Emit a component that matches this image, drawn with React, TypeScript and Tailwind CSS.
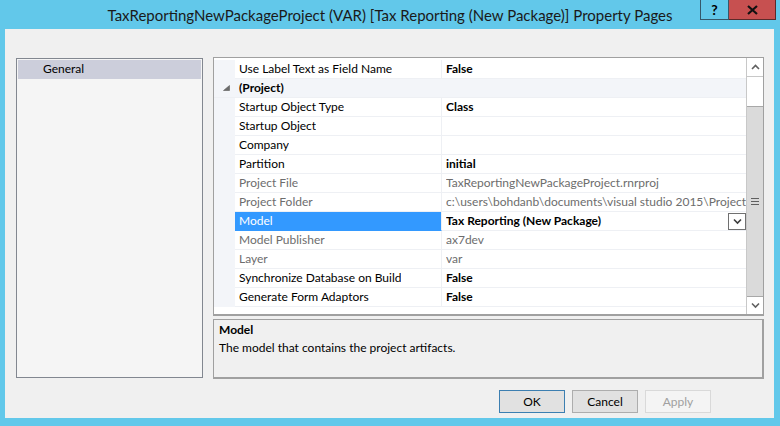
import React from 'react'

type Row =
  | { kind: 'category'; label: string }
  | { kind: 'prop'; name: string; value: string; bold?: boolean; readOnly?: boolean; selected?: boolean }

const ROWS: Row[] = [
  { kind: 'prop', name: 'Use Label Text as Field Name', value: 'False', bold: true },
  { kind: 'category', label: '(Project)' },
  { kind: 'prop', name: 'Startup Object Type', value: 'Class', bold: true },
  { kind: 'prop', name: 'Startup Object', value: '' },
  { kind: 'prop', name: 'Company', value: '' },
  { kind: 'prop', name: 'Partition', value: 'initial', bold: true },
  { kind: 'prop', name: 'Project File', value: 'TaxReportingNewPackageProject.rnrproj', readOnly: true },
  {
    kind: 'prop',
    name: 'Project Folder',
    value: 'c:\\users\\bohdanb\\documents\\visual studio 2015\\Projects\\TaxReportingNewPackageProject',
    readOnly: true,
  },
  { kind: 'prop', name: 'Model', value: 'Tax Reporting (New Package)', bold: true, selected: true },
  { kind: 'prop', name: 'Model Publisher', value: 'ax7dev', readOnly: true },
  { kind: 'prop', name: 'Layer', value: 'var', readOnly: true },
  { kind: 'prop', name: 'Synchronize Database on Build', value: 'False', bold: true },
  { kind: 'prop', name: 'Generate Form Adaptors', value: 'False', bold: true },
]

const font = { fontFamily: 'Lato, "Noto Sans", sans-serif' }

function Chevron({ dir, className }: { dir: 'up' | 'down'; className?: string }) {
  // small windows-style chevron
  const d = dir === 'up' ? 'M1 5 L4.5 1.5 L8 5' : 'M1 1.5 L4.5 5 L8 1.5'
  return (
    <svg width="9" height="7" viewBox="0 0 9 7" className={className}>
      <path d={d} fill="none" stroke="currentColor" strokeWidth="1.6" />
    </svg>
  )
}

function CategoryGlyph() {
  return (
    <svg width="7" height="6" viewBox="0 0 7 6">
      <path d="M6.5 0.5 L6.5 5.5 L0.5 5.5 Z" fill="#6b6b6b" stroke="#5a5a5a" strokeWidth="0.6" />
    </svg>
  )
}

function GridRow({ row }: { row: Row }) {
  if (row.kind === 'category') {
    return (
      <div className="flex h-[19px] bg-[#f3f5f9] border-b border-[#eef0f4]">
        <div className="w-[21px] flex items-center justify-center pl-[3px]">
          <CategoryGlyph />
        </div>
        <div className="flex-1 flex items-center pl-[4px] font-bold text-black">{row.label}</div>
      </div>
    )
  }
  const valueColor = row.readOnly ? 'text-[#6d6d6d]' : 'text-black'
  return (
    <div className="flex h-[19px]">
      <div className="w-[21px] bg-[#f3f5f9]" />
      <div
        className={
          row.selected
            ? 'w-[207px] flex items-center pl-[4px] bg-[#3399ff] text-white border-b border-[#3399ff] border-r border-r-[#eef0f4]'
            : 'w-[207px] flex items-center pl-[4px] border-b border-r border-[#eef0f4] ' + valueColor
        }
      >
        <span className="whitespace-nowrap overflow-hidden">{row.name}</span>
      </div>
      <div className={'flex-1 min-w-0 flex items-center pl-[4px] border-b border-[#eef0f4] ' + valueColor}>
        <span className={(row.bold ? 'font-bold ' : '') + 'flex-1 whitespace-nowrap overflow-hidden'}>{row.value}</span>
        {row.selected && (
          <div className="w-[18px] h-[17px] border border-[#707070] bg-white flex items-center justify-center text-[#3c3c3c]">
            <Chevron dir="down" />
          </div>
        )}
      </div>
    </div>
  )
}

function ScrollBar() {
  return (
    <div className="w-[17px] flex flex-col border-l border-[#c8c8c8] bg-white">
      <div className="h-[19px] flex items-center justify-center text-[#606060] border-b border-[#c8c8c8]">
        <Chevron dir="up" />
      </div>
      <div className="h-[29px]" />
      <div className="flex-1 bg-[#dadada] border-y border-[#a8a8a8] flex items-center justify-center">
        <div className="flex flex-col gap-[2px]">
          <div className="w-[8px] h-px bg-[#606060]" />
          <div className="w-[8px] h-px bg-[#606060]" />
          <div className="w-[8px] h-px bg-[#606060]" />
        </div>
      </div>
      <div className="h-[17px] flex items-center justify-center text-[#606060]">
        <Chevron dir="down" />
      </div>
    </div>
  )
}

function DialogButton({ label, variant }: { label: string; variant: 'default' | 'normal' | 'disabled' }) {
  const styles = {
    default: 'border-[#3c7fb1] bg-[#e1e1e1] text-black',
    normal: 'border-[#adadad] bg-[#e1e1e1] text-black',
    disabled: 'border-[#d9d9d9] bg-[#f4f4f4] text-[#a0a0a0]',
  }[variant]
  return (
    <button className={'w-[66px] h-[23px] border flex items-center justify-center text-[12px] ' + styles} style={font}>
      {label}
    </button>
  )
}

export default function App() {
  return (
    <div className="w-[780px] h-[426px] bg-[#62c8ea] flex flex-col overflow-hidden text-[12px]" style={font}>
      {/* caption */}
      <div className="relative h-[29px] flex items-center justify-center">
        <span className="text-[15px] text-[#1a1a1a] pt-[1px]">
          TaxReportingNewPackageProject (VAR) [Tax Reporting (New Package)] Property Pages
        </span>
        <div className="absolute top-0 right-[4px] flex">
          <div className="w-[29px] h-[20px] border border-[#35586a] border-t-0 flex items-center justify-center font-bold text-[14px] text-black">
            ?
          </div>
          <div className="w-[47px] h-[20px] bg-[#c75050] border border-[#5b2a2a] border-t-0 border-l-0 flex items-center justify-center">
            <svg width="11" height="10" viewBox="0 0 11 10">
              <path d="M1 1 L10 9 M10 1 L1 9" stroke="#111" strokeWidth="2.2" />
            </svg>
          </div>
        </div>
      </div>

      {/* client area */}
      <div className="mx-[5px] mr-[6px] flex-1 mb-[8px] bg-[#f0f0f0] flex flex-col pt-[28px] pl-[11px] pr-[10px]">
        <div className="flex gap-[10px]">
          <div className="w-[187px] h-[320px] mt-px border border-[#828790] bg-[#f5f5f5] p-px">
            <div className="h-[19px] bg-[#cccedb] flex items-center pl-[25px] pb-px text-black">General</div>
          </div>

          <div className="w-[551px] flex flex-col">
            <div className="h-[259px] border border-[#a0a0a0] border-b-2 bg-white flex">
              <div className="flex-1 min-w-0 flex flex-col pt-[2px]">
                {ROWS.map((r, i) => (
                  <GridRow key={i} row={r} />
                ))}
              </div>
              <ScrollBar />
            </div>
            <div className="h-[60px] mt-[3px] border border-[#a0a0a0] border-b-2 border-r-2 bg-[#f0f0f0] px-[5px] pt-[1px] text-black">
              <div className="font-bold leading-[18px]">Model</div>
              <div className="leading-[18px]">The model that contains the project artifacts.</div>
            </div>
          </div>
        </div>

        <div className="flex justify-end gap-[7px] mt-[11px] pr-[53px]">
          <DialogButton label="OK" variant="default" />
          <DialogButton label="Cancel" variant="normal" />
          <DialogButton label="Apply" variant="disabled" />
        </div>
      </div>
    </div>
  )
}
